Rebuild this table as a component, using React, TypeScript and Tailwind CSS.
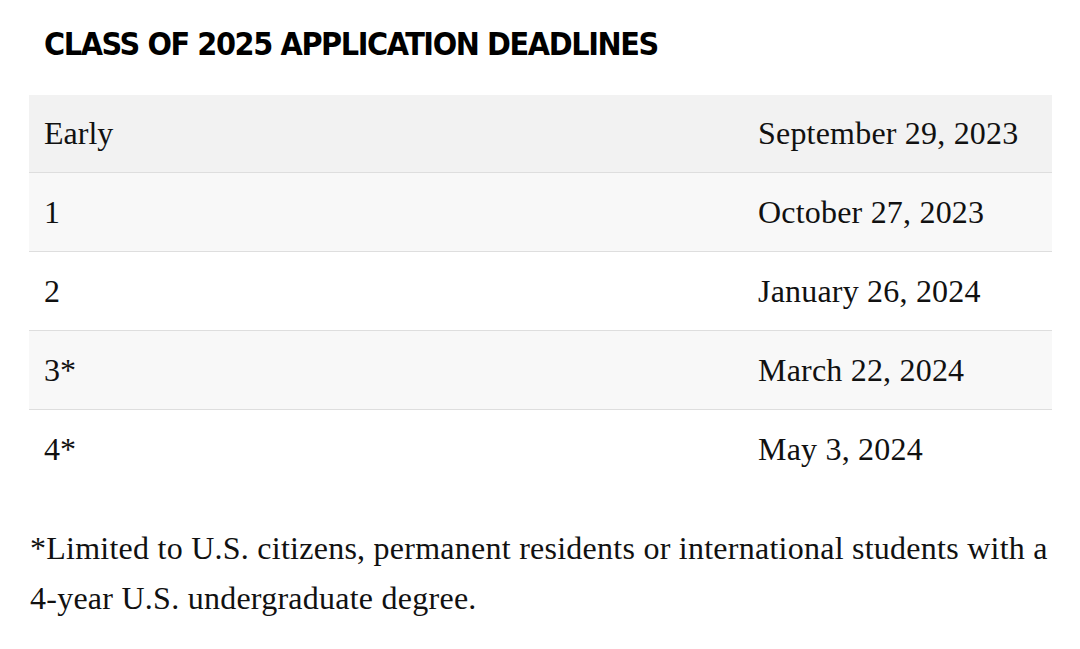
const rows = [
  { label: 'Early', date: 'September 29, 2023', bg: 'bg-[#f2f2f2]', h: 'h-[77px]' },
  { label: '1', date: 'October 27, 2023', bg: 'bg-[#f8f8f8]', h: 'h-[79px]' },
  { label: '2', date: 'January 26, 2024', bg: 'bg-white', h: 'h-[79px]' },
  { label: '3*', date: 'March 22, 2024', bg: 'bg-[#f8f8f8]', h: 'h-[79px]' },
  { label: '4*', date: 'May 3, 2024', bg: 'bg-white', h: 'h-[79px]' },
]

export default function App() {
  return (
    <div className="min-h-[649px] w-[1080px] bg-white text-[#111]">
      <div className="pl-[29px] pr-[28px] pt-[20px]">
        <h2 className="pl-[15px] font-['DejaVu_Sans_Condensed',sans-serif] text-[32px] font-bold leading-[48px] tracking-[-1.4px] text-black">
          CLASS OF 2025 APPLICATION DEADLINES
        </h2>

        {/* Deadlines table */}
        <table className="mt-[27px] w-full border-collapse font-['Liberation_Serif',serif] text-[32px]">
          <tbody>
            {rows.map((r, i) => (
              <tr key={r.label} className={`${r.bg} ${i < rows.length - 1 ? 'border-b border-[#dedede]' : ''}`}>
                <td className={`${r.h} pl-[15px] align-middle`}>{r.label}</td>
                <td className={`${r.h} w-[309px] pl-[15px] align-middle tracking-[0.2px]`}>{r.date}</td>
              </tr>
            ))}
          </tbody>
        </table>

        <p className="mt-[35px] pl-px font-['Liberation_Serif',serif] text-[32px] leading-[50px] tracking-[0.25px]">
          *Limited to U.S. citizens, permanent residents or international students with a 4-year U.S. undergraduate degree.
        </p>
      </div>
    </div>
  )
}
